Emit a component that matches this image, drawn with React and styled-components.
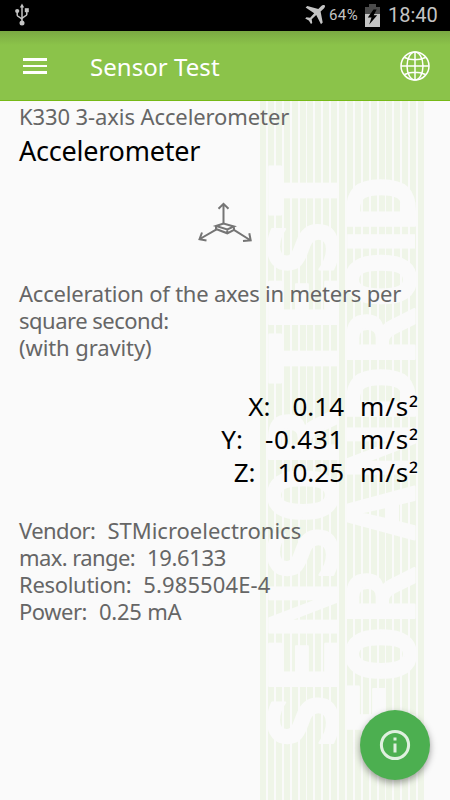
import React from "react";
import styled, { createGlobalStyle } from "styled-components";

const sensorTest = [
  ["S", 721],
  ["E", 665.5],
  ["N", 610],
  ["S", 553],
  ["O", 495],
  ["R", 437],
  ["T", 358.5],
  ["E", 303.5],
  ["S", 247.5],
  ["T", 190.5],
];

const forAndroid = [
  ["F", 709],
  ["O", 654],
  ["R", 596],
  ["A", 513],
  ["N", 451],
  ["D", 394],
  ["R", 337],
  ["O", 279.5],
  ["I", 241.5],
  ["D", 204],
];

const readings = [
  { axis: "X:", value: "0.14", spacing: 0 },
  { axis: "Y:", value: "-0.431", spacing: 0.7 },
  { axis: "Z:", value: "10.25", spacing: 0 },
];

const details = [
  { label: "Vendor:", value: "STMicroelectronics", tight: -0.6, spacing: 0 },
  { label: "max. range:", value: "19.6133", tight: -0.6, spacing: -0.35 },
  { label: "Resolution:", value: "5.985504E-4", tight: -0.3, spacing: 0.1 },
  { label: "Power:", value: "0.25 mA", tight: -0.5, spacing: -0.2 },
];

// One glyph per centre point, so the letters keep the even pitch of the print
const BannerWord = ({ letters, baseline }) => (
  <g transform={`translate(${baseline} 0) rotate(-90)`}>
    {letters.map(([letter, y]) => (
      <text
        key={y}
        x={-y}
        y="0"
        className={letter === "I" ? "narrow" : undefined}
      >
        {letter}
      </text>
    ))}
  </g>
);

const App = () => {
  return (
    <Screen>
      <GlobalStyle />
      <Banner>
        <svg width="164" height="699" viewBox="260 101 164 699">
          <BannerWord letters={sensorTest} baseline={337} />
          <BannerWord letters={forAndroid} baseline={415} />
        </svg>
      </Banner>
      <StatusBar>
        <svg className="usb" width="14" height="24" viewBox="0 0 14 24">
          <path d="M7 3v17M2.2 8v4.2c0 1.5 4.8 2.6 4.8 4.6M11.8 7v4.5c0 1.5-4.8 2.5-4.8 4.5" />
          <path className="fill" d="M7 .5l2.2 4H4.8z" />
          <circle className="fill" cx="2.2" cy="8" r="2.1" />
          <rect className="fill" x="9.8" y="5.2" width="4" height="4" />
          <circle className="fill" cx="7" cy="20" r="2.5" />
        </svg>
        <svg className="plane" width="21" height="21" viewBox="0 0 21 21">
          <path d="M19.8.6c-1-.9-2.500-.5-3.500.5l-3 3L2.300.9.600 2.600l8.600 5.600-4.100 4.500-3.700-.5-1.200 1.200 3.600 2 2.200 3.700 1.200-1.200-.5-3.600 4.500-4.200 4.800 9.200 1.700-1.700-2.100-11.100 3.300-3c1-1 1.500-2.200.9-2.900z" />
        </svg>
        <Percent>64%</Percent>
        <svg className="battery" width="15" height="23" viewBox="0 0 15 23">
          <path d="M4 0h7v3h4v7H0V3h4z" fill="#4b4b4b" />
          <path d="M0 10h15v13H0z" fill="#c4c4c4" />
          <path d="M8.500 5.500L2.800 13.500h3.700L4.200 20.500l8-9.300H8.700l3-5.700z" fill="#000" />
        </svg>
        <Clock>18:40</Clock>
      </StatusBar>
      <Toolbar>
        <MenuIcon>
          <span />
          <span />
          <span />
        </MenuIcon>
        <h1>Sensor Test</h1>
        <svg width="30" height="30" viewBox="0 0 30 30">
          <circle cx="15" cy="15" r="14" />
          <ellipse cx="15" cy="15" rx="8" ry="14" />
          <path d="M15 1v28M1 15h28M4.500 6.500q10.500 4.500 21 0M4.500 23.500q10.500-4.500 21 0" />
        </svg>
      </Toolbar>
      <Content>
        <Text $spacing={-0.1}>K330 3-axis Accelerometer</Text>
        <SensorName>Accelerometer</SensorName>
        <AxesIcon width="54" height="42" viewBox="0 0 54 42">
          <path d="M25.500 21V2M20.500 6.800l5-5 5 5M18.500 27.300L1.800 37M4 30.500L1.500 37.300l7 1.300M35.500 27.700L52 38M51.300 31.300l1.400 7-7.700.7" />
          <path d="M18 24l7.500-2.500L36 24.500l-6.700 3zM18 24v3l11.300 4.300L36 27.800v-3.300M29.300 27.500v3.500" />
        </AxesIcon>
        <Text $spacing={-0.21}>Acceleration of the axes in meters per</Text>
        <Text $spacing={-0.5}>square second:</Text>
        <Text $spacing={-0.1}>(with gravity)</Text>
        <Readings>
          {readings.map(({ axis, value, spacing }) => (
            <Reading key={axis}>
              <Axis>{axis}</Axis>
              <Value $spacing={spacing}>{value}</Value>
              <Unit>
                m/s<span>²</span>
              </Unit>
            </Reading>
          ))}
        </Readings>
        {details.map(({ label, value, tight, spacing }) => (
          <Text key={label} $spacing={spacing}>
            <Label $spacing={tight}>{label}</Label>
            {value}
          </Text>
        ))}
      </Content>
      <InfoButton aria-label="Info">
        <svg width="32" height="32" viewBox="0 0 32 32">
          <circle cx="16" cy="16" r="13.600" />
          <path d="M16 14.500v9M16 8.500v3" />
        </svg>
      </InfoButton>
    </Screen>
  );
};

const GlobalStyle = createGlobalStyle`
  * {
    box-sizing: border-box;
  }
  body {
    margin: 0;
    background: #fafafa;
  }
`;

const Screen = styled.main`
  position: relative;
  width: 450px;
  height: 800px;
  overflow: hidden;
  background: #fafafa;
  font-family: "Noto Sans", sans-serif;
`;

const Banner = styled.div`
  position: absolute;
  top: 101px;
  left: 260px;
  width: 164px;
  height: 699px;
  background: repeating-linear-gradient(
    to right,
    #eff5e8 0 6px,
    #fafafa 6px 7.9px
  );
  svg {
    display: block;
    overflow: visible;
  }
  text {
    fill: #fafafa;
    stroke: #fafafa;
    stroke-width: 2;
    stroke-linejoin: round;
    font-family: "DejaVu Sans Mono", monospace;
    font-size: 93px;
    font-weight: bold;
    text-anchor: middle;
  }
  .narrow {
    stroke: none;
    font-family: "Liberation Sans", sans-serif;
    font-size: 98px;
  }
`;

const StatusBar = styled.header`
  display: flex;
  align-items: center;
  height: 31px;
  padding: 0 12px 1px 15px;
  background: #000;
  color: #c4c4c4;
  font-family: Roboto, sans-serif;
  .usb {
    margin-right: auto;
    fill: none;
    stroke: #c4c4c4;
    stroke-width: 1.5;
  }
  .fill {
    fill: #c4c4c4;
    stroke: none;
  }
  .plane {
    fill: #c4c4c4;
    margin-right: 3px;
  }
  .battery {
    margin: 0 8px 0 6px;
  }
`;

const Percent = styled.span`
  width: 30px;
  font-size: 15px;
  letter-spacing: 0.4px;
`;

const Clock = styled.span`
  width: 50px;
  font-size: 20px;
`;

const Toolbar = styled.nav`
  position: relative;
  display: flex;
  align-items: center;
  height: 70px;
  padding: 0 20px 0 23px;
  background: linear-gradient(#7aa843, #8bc34a 14px);
  border-bottom: 1px solid #76b917;
  color: #fff;
  h1 {
    flex: 1;
    margin: 2px 0 0 43px;
    font-size: 24px;
    font-weight: 400;
    letter-spacing: 0.05px;
  }
  svg {
    fill: none;
    stroke: #fff;
    stroke-width: 1.5;
  }
`;

const MenuIcon = styled.div`
  display: grid;
  gap: 4px;
  width: 24px;
  margin-top: 1px;
  span {
    height: 2.6px;
    background: #fff;
  }
`;

const Content = styled.section`
  position: relative;
  display: flex;
  flex-direction: column;
  padding: 2px 32px 0 19px;
`;

const Text = styled.p`
  margin: 0;
  color: #666;
  font-size: 22px;
  line-height: 27px;
  letter-spacing: ${({ $spacing }) => $spacing}px;
  white-space: nowrap;
`;

const Label = styled.span`
  margin-right: 12px;
  letter-spacing: ${({ $spacing }) => $spacing}px;
`;

const SensorName = styled.h2`
  margin: 4px 0 0;
  color: #000;
  font-size: 27px;
  font-weight: 400;
  line-height: 34px;
  letter-spacing: -0.23px;
`;

const AxesIcon = styled.svg`
  align-self: center;
  margin: 34px 0 36px 13px;
  fill: none;
  stroke: #757575;
  stroke-width: 2;
`;

const Readings = styled.div`
  margin: 29px 0 28px;
`;

const Reading = styled.div`
  display: flex;
  justify-content: flex-end;
  color: #000;
  font-size: 26px;
  line-height: 33px;
  white-space: nowrap;
`;

const Axis = styled.span`
  margin-right: 22px;
`;

const Value = styled.span`
  margin-right: 16px;
  letter-spacing: ${({ $spacing }) => $spacing}px;
`;

const Unit = styled.span`
  letter-spacing: 0.8px;
  span {
    position: relative;
    top: 2px;
    letter-spacing: 0;
  }
`;

const InfoButton = styled.button`
  position: absolute;
  right: 20px;
  bottom: 20px;
  display: flex;
  align-items: center;
  justify-content: center;
  width: 70px;
  height: 70px;
  padding: 0;
  border: 0;
  border-radius: 50%;
  background: #4caf50;
  box-shadow: 0 3px 7px rgba(0, 0, 0, 0.38);
  svg {
    fill: none;
    stroke: #dff0df;
    stroke-width: 3;
  }
`;

export default App;
